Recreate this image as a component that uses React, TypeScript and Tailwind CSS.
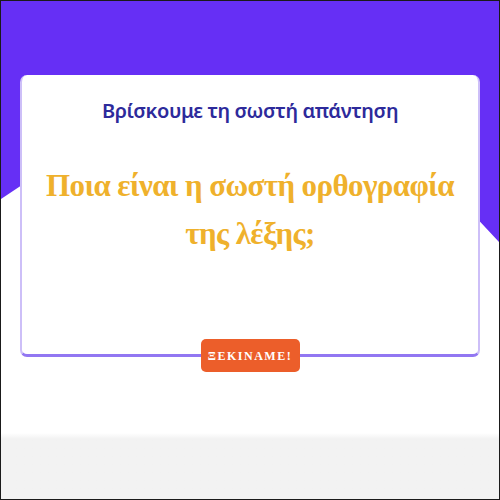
import React from "react";

export default function App() {
  return (
    <div className="relative flex h-[500px] w-[500px] flex-col overflow-hidden border border-[#1a1a1a] bg-white">
      {/* purple backdrop with slanted bottom */}
      <div className="absolute inset-x-0 top-0 h-[245px] bg-[#662ff5] [clip-path:polygon(0_0,100%_0,100%_241px,470px_211px,30px_178px,0_198px)]" />

      <div className="relative px-[19px] pt-[74px]">
        <div className="flex h-[282px] flex-col items-center rounded-[7px] border-x-2 border-b-[3px] border-x-[#cdbff8] border-b-[#9277f2] bg-white pt-[21px]">
          <h2 className="text-[20px] font-semibold leading-[30px] tracking-[-0.4px] text-[#2d2a9b] [font-family:'Noto_Sans',sans-serif]">
            Βρίσκουμε τη σωστή απάντηση
          </h2>
          <p className="mt-[36px] text-center text-[31px] font-bold leading-[48px] tracking-[-0.6px] text-[#efb12c] [font-family:'Liberation_Serif',serif]">
            Ποια είναι η σωστή ορθογραφία
            <br />
            της λέξης;
          </p>
        </div>

        <div className="-mt-[18px] flex justify-center">
          <button className="h-[33px] w-[99px] rounded-[5px] bg-[#ec5e2a] text-[12px] font-bold tracking-[1.5px] text-white [font-family:'Liberation_Serif',serif]">
            ΞΕΚΙΝΑΜΕ!
          </button>
        </div>
      </div>

      <div className="mt-auto h-[66px] bg-gradient-to-b from-white to-[#f2f2f2] to-[6px]" />
    </div>
  );
}
